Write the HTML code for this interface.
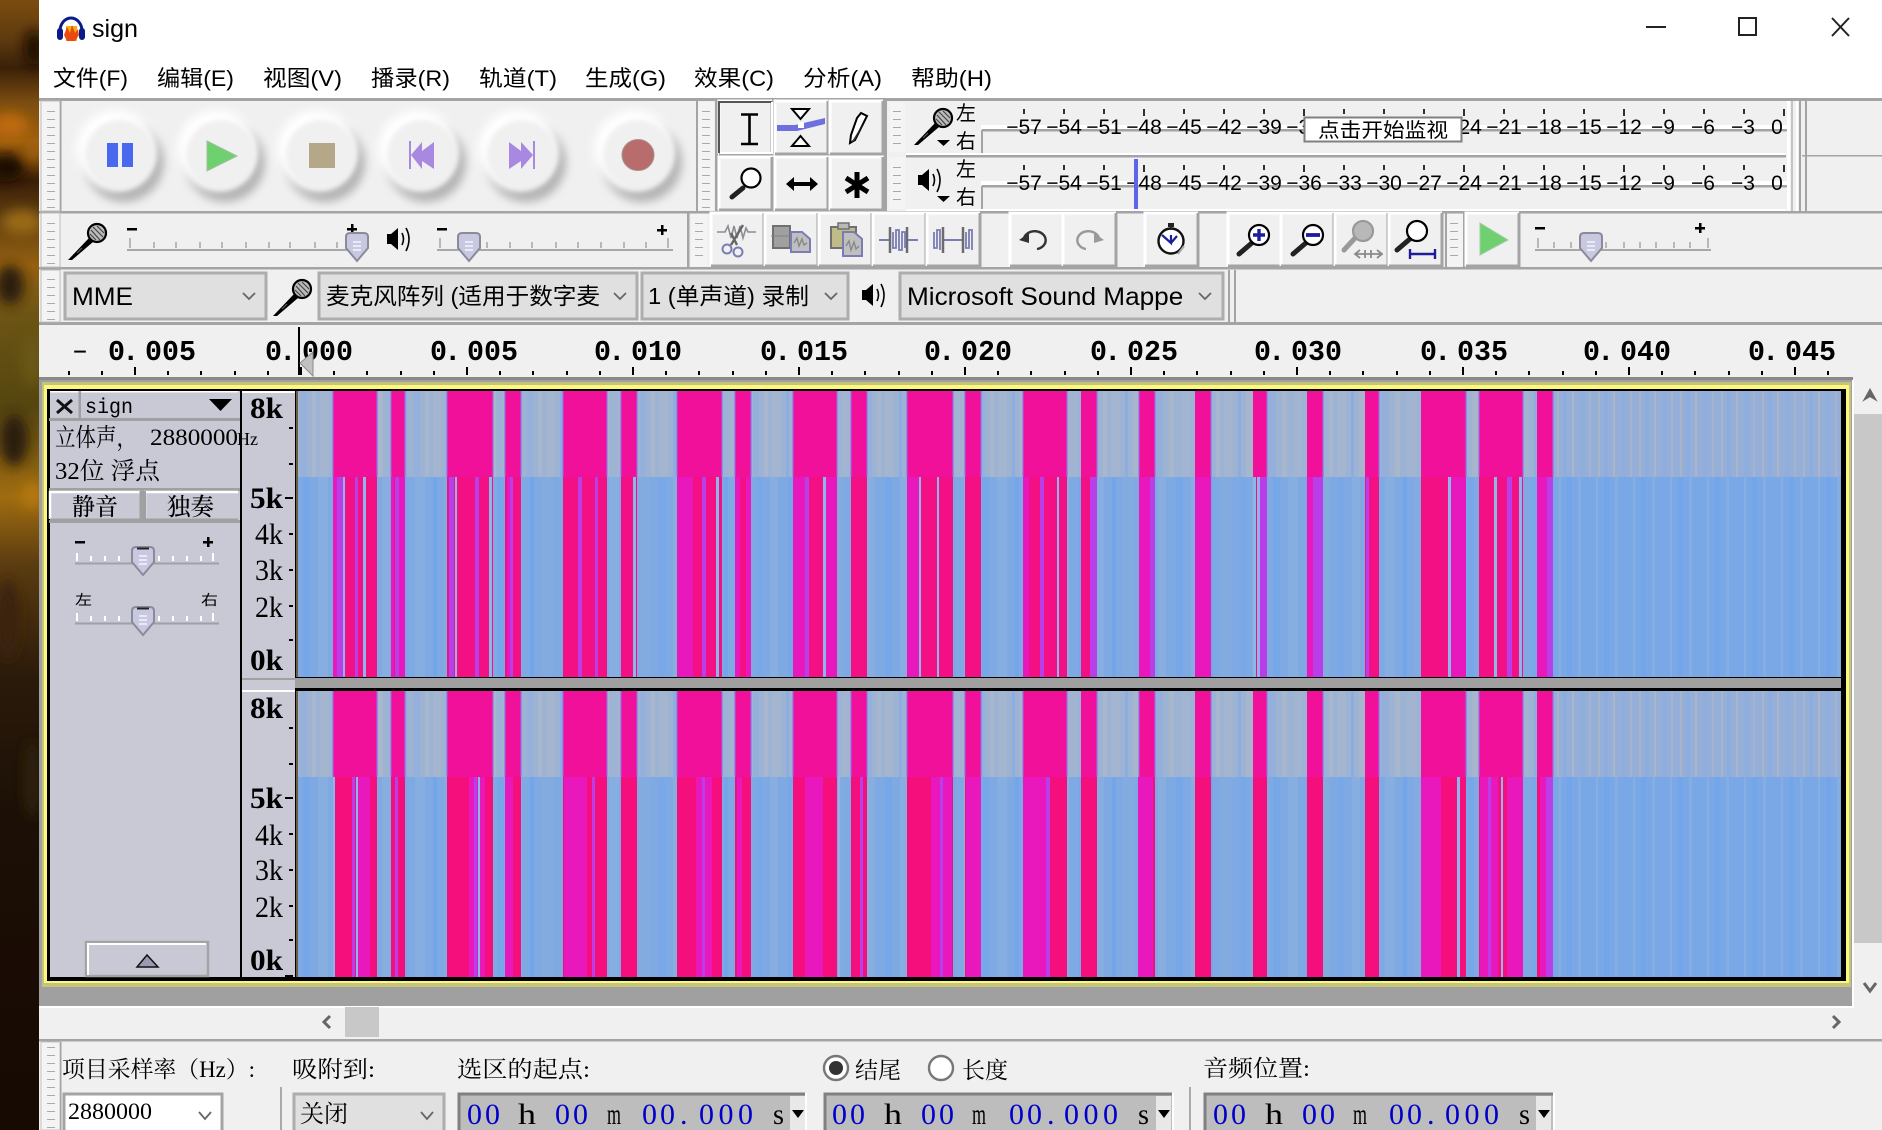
<!DOCTYPE html>
<html lang="zh"><head><meta charset="utf-8"><title>sign</title>
<style>
html,body{margin:0;padding:0;width:1882px;height:1130px;overflow:hidden;background:#fff}
svg{display:block}
.s{font-family:"Liberation Sans","Noto Sans CJK SC",sans-serif;fill:#000}
.z{font-family:"Liberation Serif","Noto Serif CJK SC",serif;fill:#000}
.m{font-family:"Liberation Mono","Noto Serif CJK SC",monospace;fill:#000}
.r{font-family:"Liberation Mono",monospace;font-weight:bold;font-size:29px;fill:#000}
.t{font-size:21px;text-anchor:middle}
.b{fill:#0000c8;font-size:30px}
.v{font-size:30px}
</style></head><body>
<svg width="1882" height="1130" viewBox="0 0 1882 1130" xmlns="http://www.w3.org/2000/svg">
<defs>
<linearGradient id="wall" x1="0" y1="0" x2="0" y2="1">
<stop offset="0" stop-color="#7a4c10"/><stop offset=".035" stop-color="#5e3a0e"/><stop offset=".06" stop-color="#3a2008"/><stop offset=".09" stop-color="#7a4c10"/><stop offset=".125" stop-color="#a0600e"/><stop offset=".16" stop-color="#3a1e06"/><stop offset=".19" stop-color="#5c3c10"/><stop offset=".235" stop-color="#946010"/><stop offset=".28" stop-color="#6c5414"/><stop offset=".36" stop-color="#544610"/><stop offset=".44" stop-color="#a06c10"/><stop offset=".5" stop-color="#5a3c10"/><stop offset=".6" stop-color="#2a1a0a"/><stop offset=".72" stop-color="#1c1006"/><stop offset=".85" stop-color="#1a0c04"/><stop offset="1" stop-color="#160a02"/>
</linearGradient>
<filter id="bl6" x="-60%" y="-60%" width="220%" height="220%"><feGaussianBlur stdDeviation="6"/></filter>
<clipPath id="cw"><rect width="39" height="1130"/></clipPath>
<pattern id="grip" width="8" height="8" patternUnits="userSpaceOnUse"><rect x="0" y="7" width="8" height="2" fill="#a8a8a8"/></pattern>
<pattern id="rt" width="166" height="20" patternUnits="userSpaceOnUse" patternTransform="translate(134,360)">
<rect x="0" y="7" width="2" height="8" fill="#000"/><rect x="33" y="11" width="2" height="4" fill="#000"/><rect x="66" y="11" width="2" height="4" fill="#000"/><rect x="100" y="11" width="2" height="4" fill="#000"/><rect x="133" y="11" width="2" height="4" fill="#000"/>
</pattern>
<pattern id="st1" width="113" height="10" patternUnits="userSpaceOnUse" patternTransform="translate(298,0)">
<rect width="113" height="10" fill="#9db3d4"/><rect x="3" width="6" height="10" fill="#95b0da"/><rect x="14" width="4" height="10" fill="#a8b6ce"/><rect x="22" width="9" height="10" fill="#a4b5cf"/><rect x="36" width="3" height="10" fill="#8dacdf"/><rect x="44" width="10" height="10" fill="#a7b6cc"/><rect x="58" width="3" height="10" fill="#b0bac8"/><rect x="66" width="8" height="10" fill="#94afd9"/><rect x="80" width="5" height="10" fill="#a9b7cc"/><rect x="92" width="9" height="10" fill="#a1b4d1"/><rect x="106" width="3" height="10" fill="#8fade0"/>
</pattern>
<pattern id="st2" width="97" height="10" patternUnits="userSpaceOnUse" patternTransform="translate(298,0)">
<rect width="97" height="10" fill="#7ea9e3"/><rect x="5" width="7" height="10" fill="#76a7e8"/><rect x="20" width="10" height="10" fill="#86aee0"/><rect x="38" width="4" height="10" fill="#73a5ea"/><rect x="49" width="12" height="10" fill="#83abe0"/><rect x="70" width="6" height="10" fill="#78a8e7"/><rect x="84" width="8" height="10" fill="#87aedf"/>
</pattern>
<pattern id="st3" width="41" height="10" patternUnits="userSpaceOnUse" patternTransform="translate(1553,0)">
<rect width="41" height="10" fill="#96afd8"/><rect x="4" width="2" height="10" fill="#a8b4c8"/><rect x="10" width="4" height="10" fill="#8dadde"/><rect x="19" width="2" height="10" fill="#aab6c8"/><rect x="27" width="5" height="10" fill="#90aedc"/><rect x="36" width="2" height="10" fill="#a4b3ce"/>
</pattern>
<pattern id="st4" width="37" height="10" patternUnits="userSpaceOnUse" patternTransform="translate(1553,0)">
<rect width="37" height="10" fill="#7aa8e6"/><rect x="6" width="2" height="10" fill="#86aee0"/><rect x="14" width="5" height="10" fill="#72a5ea"/><rect x="25" width="3" height="10" fill="#84ade2"/>
</pattern>
<path id="bars" d="M333 0H377V1H333ZM391 0H405V1H391ZM447 0H493V1H447ZM505 0H521V1H505ZM563 0H607V1H563ZM621 0H637V1H621ZM677 0H722V1H677ZM735 0H751V1H735ZM793 0H837V1H793ZM851 0H867V1H851ZM907 0H953V1H907ZM965 0H981V1H965ZM1023 0H1067V1H1023ZM1081 0H1097V1H1081ZM1139 0H1155V1H1139ZM1195 0H1211V1H1195ZM1253 0H1267V1H1253ZM1307 0H1323V1H1307ZM1365 0H1379V1H1365ZM1421 0H1466V1H1421ZM1479 0H1523V1H1479ZM1537 0H1553V1H1537Z"/>
<path id="edges" d="M333 0V1M377 0V1M391 0V1M405 0V1M447 0V1M493 0V1M505 0V1M521 0V1M563 0V1M607 0V1M621 0V1M637 0V1M677 0V1M722 0V1M735 0V1M751 0V1M793 0V1M837 0V1M851 0V1M867 0V1M907 0V1M953 0V1M965 0V1M981 0V1M1023 0V1M1067 0V1M1097 0V1M1139 0V1M1155 0V1M1211 0V1M1267 0V1M1323 0V1M1379 0V1M1466 0V1M1479 0V1M1523 0V1M1553 0V1" stroke-width="1.6" fill="none" vector-effect="non-scaling-stroke"/>
<g id="mic"><path d="M-8 5L-4 9L-25 27L-29 27Z" fill="#000"/><path d="M-20 20L-15 15" stroke="#666" stroke-width="1"/><circle cx="0" cy="0" r="9" fill="#bbb" stroke="#000" stroke-width="2.2"/><path d="M-6 -3L3 7M-4 -6L6 4M0 -7L7 0M-7 1L-1 7" stroke="#444" stroke-width="1.2"/></g>
<g id="spk"><path d="M0 7H4L11 1V23L4 17H0Z" fill="#000"/><path d="M15 6Q18 12 15 18M19 1Q25 12 19 24" fill="none" stroke="#000" stroke-width="1.6"/></g>
<g id="thumb"><path d="M-11 4Q-11 0 -7 0H7Q11 0 11 4V15L0 28L-11 15Z" fill="#c8c9e0" stroke="#8a8a9a" stroke-width="2"/><path d="M-4 9H4M-4 13H4M-4 17H4" stroke="#f4f4ff" stroke-width="1.6"/></g>
<g id="btn"><rect width="53" height="53" fill="#f0f0f0"/><path d="M0 53V0H53" fill="none" stroke="#fff" stroke-width="3"/><path d="M0 53H53V0" fill="none" stroke="#a4a4a4" stroke-width="3"/></g>
<g id="circ"><circle cx="4" cy="7" r="40" fill="#b2b2b2" filter="url(#bl4)"/><circle cx="-4" cy="-5" r="40" fill="#fff" filter="url(#bl4)"/><circle cx="0" cy="0" r="35" fill="#f0f0f0" filter="url(#bl2)"/></g>
<filter id="bl4" x="-30%" y="-30%" width="160%" height="160%"><feGaussianBlur stdDeviation="4.5"/></filter>
<filter id="bl2" x="-30%" y="-30%" width="160%" height="160%"><feGaussianBlur stdDeviation="2.5"/></filter>
<g id="lens"><path d="M-6 7L-20 19" stroke="#222" stroke-width="5" stroke-linecap="round"/><circle r="10" fill="#fff" stroke="#000" stroke-width="2.2"/></g>
<clipPath id="cout"><rect x="900" y="270" width="282" height="50"/></clipPath>
<clipPath id="cin"><rect x="320" y="270" width="281" height="50"/></clipPath>
<clipPath id="cch"><rect x="645" y="270" width="165" height="50"/></clipPath>
</defs>

<rect width="1882" height="1130" fill="#fff"/>
<rect x="0" y="0" width="39" height="1130" fill="url(#wall)"/>
<g clip-path="url(#cw)">
<g filter="url(#bl6)">
<ellipse cx="34" cy="48" rx="10" ry="18" fill="#1c0c02"/>
<ellipse cx="10" cy="125" rx="18" ry="12" fill="#c06a10"/>
<ellipse cx="6" cy="168" rx="20" ry="14" fill="#1a0a02"/>
<ellipse cx="34" cy="150" rx="9" ry="12" fill="#a06010"/>
<ellipse cx="22" cy="222" rx="20" ry="12" fill="#9a6a14"/>
<ellipse cx="10" cy="285" rx="14" ry="20" fill="#2a1c08"/>
<ellipse cx="32" cy="360" rx="10" ry="26" fill="#6a5814"/>
<ellipse cx="14" cy="440" rx="14" ry="26" fill="#2a1a08"/>
<ellipse cx="32" cy="495" rx="10" ry="14" fill="#b47810"/>
<ellipse cx="8" cy="620" rx="12" ry="40" fill="#3a2410"/>
<ellipse cx="32" cy="780" rx="8" ry="40" fill="#2e2008"/>
</g>
</g>
<rect x="39" y="99" width="1843" height="1031" fill="#f0f0f0"/>

<!-- Title bar -->
<path d="M60 31A11 13 0 0 1 82 31" fill="none" stroke="#0a1a8a" stroke-width="3"/>
<rect x="66" y="26" width="11" height="15" fill="#f4b010"/><path d="M64 35L67 27L70 33L72 25L75 33L78 29L79 35L75 41H67Z" fill="#e84a10"/>
<rect x="57" y="28" width="6" height="12" rx="3" fill="#0a1a8a"/><rect x="79" y="28" width="6" height="12" rx="3" fill="#0a1a8a"/>
<text class="s" x="92" y="37" font-size="25" textLength="46" lengthAdjust="spacingAndGlyphs" fill="#222">sign</text>
<rect x="1646" y="26" width="20" height="2" fill="#222"/>
<rect x="1739" y="18" width="17" height="17" fill="none" stroke="#222" stroke-width="2"/>
<path d="M1832 18L1849 36M1849 18L1832 36" stroke="#222" stroke-width="2"/>

<!-- Menu -->
<g font-size="22" class="s">
<text class="s" x="53" y="86" textLength="75" lengthAdjust="spacingAndGlyphs" font-size="22">文件(F)</text>
<text class="s" x="157" y="86" textLength="77" lengthAdjust="spacingAndGlyphs" font-size="22">编辑(E)</text>
<text class="s" x="263" y="86" textLength="79" lengthAdjust="spacingAndGlyphs" font-size="22">视图(V)</text>
<text class="s" x="371" y="86" textLength="79" lengthAdjust="spacingAndGlyphs" font-size="22">播录(R)</text>
<text class="s" x="479" y="86" textLength="78" lengthAdjust="spacingAndGlyphs" font-size="22">轨道(T)</text>
<text class="s" x="585" y="86" textLength="81" lengthAdjust="spacingAndGlyphs" font-size="22">生成(G)</text>
<text class="s" x="694" y="86" textLength="80" lengthAdjust="spacingAndGlyphs" font-size="22">效果(C)</text>
<text class="s" x="803" y="86" textLength="79" lengthAdjust="spacingAndGlyphs" font-size="22">分析(A)</text>
<text class="s" x="911" y="86" textLength="81" lengthAdjust="spacingAndGlyphs" font-size="22">帮助(H)</text>
</g>

<!-- Toolbar lines -->
<rect x="39" y="98" width="1843" height="3" fill="#a4a4a4"/>
<rect x="39" y="211" width="1843" height="2.5" fill="#a4a4a4"/>
<rect x="39" y="267" width="1843" height="2.5" fill="#a4a4a4"/>
<rect x="39" y="322" width="1843" height="3" fill="#a4a4a4"/>
<rect x="696" y="101" width="2" height="110" fill="#a4a4a4"/>
<rect x="884" y="101" width="3" height="110" fill="#a4a4a4"/>
<rect x="715" y="101" width="3" height="110" fill="#a4a4a4"/>
<rect x="687" y="213" width="2.5" height="54" fill="#a4a4a4"/>
<rect x="1802" y="155" width="80" height="1.5" fill="#a4a4a4"/>

<!-- Grippers -->
<g>
<rect x="41" y="101" width="19" height="110" fill="#f4f4f4" stroke="#bcbcbc"/><rect x="47" y="104" width="8" height="104" fill="url(#grip)"/>
<rect x="60" y="101" width="1.5" height="110" fill="#a4a4a4"/>
<rect x="41" y="213" width="19" height="54" fill="#f4f4f4" stroke="#bcbcbc"/><rect x="47" y="218" width="8" height="46" fill="url(#grip)"/>
<rect x="41" y="270" width="19" height="52" fill="#f4f4f4" stroke="#bcbcbc"/><rect x="47" y="274" width="8" height="46" fill="url(#grip)"/>
<rect x="698" y="102" width="16" height="108" fill="#f4f4f4"/><rect x="702" y="104" width="8" height="104" fill="url(#grip)"/>
<rect x="889" y="102" width="16" height="50" fill="#f4f4f4"/><rect x="893" y="104" width="8" height="46" fill="url(#grip)"/>
<rect x="889" y="157" width="16" height="52" fill="#f4f4f4"/><rect x="893" y="160" width="8" height="46" fill="url(#grip)"/>
<rect x="691" y="214" width="16" height="52" fill="#f4f4f4"/><rect x="695" y="218" width="8" height="44" fill="url(#grip)"/>
<rect x="1446" y="214" width="17" height="52" fill="#f4f4f4"/><rect x="1450" y="218" width="8" height="44" fill="url(#grip)"/>
<rect x="1445" y="213" width="2" height="54" fill="#a4a4a4"/><rect x="1463" y="213" width="2" height="54" fill="#a4a4a4"/>
</g>

<!-- Transport -->
<use href="#circ" x="120" y="155"/><use href="#circ" x="221" y="155"/><use href="#circ" x="321" y="155"/><use href="#circ" x="422" y="155"/><use href="#circ" x="522" y="155"/><use href="#circ" x="638" y="155"/>
<rect x="107" y="143" width="11" height="24" fill="#4a68ee"/><rect x="122" y="143" width="11" height="24" fill="#4a68ee"/>
<path d="M207 141L237 156L207 171Z" fill="#6fd06f" stroke="#9cc09c"/>
<rect x="309" y="143" width="26" height="25" fill="#b5a888"/>
<path d="M409 141H411V169H409ZM434 142V169L422 161V169L411 155L422 142V151Z" fill="#a888e0"/>
<path d="M533 141H535V169H533ZM509 142V169L521 161V169L533 155L521 142V151Z" fill="#a888e0"/>
<ellipse cx="638" cy="155" rx="16" ry="15.5" fill="#b96c6c" stroke="#a89090"/>

<!-- Mixer row -->
<use href="#mic" x="97" y="233"/>
<use href="#spk" x="387" y="227"/>
<g fill="#000">
<rect x="127" y="228" width="10" height="2.5"/><rect x="347" y="228" width="10" height="2.5"/><rect x="351" y="224" width="2.5" height="10"/>
<rect x="437" y="228" width="10" height="2.5"/><rect x="657" y="229" width="10" height="2.5"/><rect x="661" y="225" width="2.5" height="10"/>
<rect x="1535" y="227" width="10" height="2.5"/><rect x="1695" y="227" width="10" height="2.5"/><rect x="1699" y="223" width="2.5" height="10"/>
</g>
<g fill="#b8b8b8">
<rect x="129" y="238" width="2" height="10"/><rect x="153" y="242" width="2" height="6"/><rect x="175" y="242" width="2" height="6"/><rect x="199" y="242" width="2" height="6"/><rect x="221" y="242" width="2" height="6"/><rect x="245" y="242" width="2" height="6"/><rect x="268" y="242" width="2" height="6"/><rect x="289" y="242" width="2" height="6"/><rect x="314" y="242" width="2" height="6"/><rect x="336" y="242" width="2" height="6"/>
<rect x="439" y="238" width="2" height="10"/><rect x="486" y="242" width="2" height="6"/><rect x="509" y="242" width="2" height="6"/><rect x="531" y="242" width="2" height="6"/><rect x="555" y="242" width="2" height="6"/><rect x="577" y="242" width="2" height="6"/><rect x="600" y="242" width="2" height="6"/><rect x="623" y="242" width="2" height="6"/><rect x="645" y="242" width="2" height="6"/><rect x="667" y="238" width="2" height="10"/>
<rect x="1537" y="238" width="2" height="10"/><rect x="1553" y="242" width="2" height="6"/><rect x="1570" y="242" width="2" height="6"/><rect x="1605" y="242" width="2" height="6"/><rect x="1623" y="242" width="2" height="6"/><rect x="1639" y="242" width="2" height="6"/><rect x="1655" y="242" width="2" height="6"/><rect x="1673" y="242" width="2" height="6"/><rect x="1689" y="242" width="2" height="6"/><rect x="1707" y="238" width="2" height="10"/>
</g>
<rect x="127" y="249" width="225" height="2" fill="#a8a8a8"/><rect x="437" y="249" width="236" height="2" fill="#a8a8a8"/><rect x="1535" y="249" width="176" height="2" fill="#a8a8a8"/>
<use href="#thumb" x="357" y="233"/><use href="#thumb" x="469" y="233"/><use href="#thumb" x="1591" y="233"/>

<!-- Device row -->
<g fill="#e0e0e0" stroke="#adadad" stroke-width="3">
<rect x="65" y="273" width="201" height="46"/><rect x="319" y="273" width="318" height="46"/><rect x="642" y="273" width="206" height="46"/><rect x="900" y="273" width="323" height="46"/>
</g>
<use href="#mic" x="302" y="289"/>
<use href="#spk" x="862" y="283"/>
<text class="s" x="72" y="305" font-size="25" textLength="61" lengthAdjust="spacingAndGlyphs">MME</text>
<text class="s" x="326" y="304" font-size="23" textLength="274" lengthAdjust="spacingAndGlyphs" clip-path="url(#cin)">麦克风阵列 (适用于数字麦</text>
<text class="s" x="648" y="304" font-size="23" textLength="161" lengthAdjust="spacingAndGlyphs" clip-path="url(#cch)">1 (单声道) 录制</text>
<text class="s" x="907" y="305" font-size="25" textLength="285" lengthAdjust="spacingAndGlyphs" clip-path="url(#cout)">Microsoft Sound Mapper</text>
<path d="M243 293L249 299L255 293M614 293L620 299L626 293M825 293L831 299L837 293M1199 293L1205 299L1211 293" fill="none" stroke="#666" stroke-width="1.8"/>
<rect x="1228" y="270" width="2" height="52" fill="#a4a4a4"/><rect x="1234" y="270" width="2" height="52" fill="#a4a4a4"/>

<!-- Tools -->
<use href="#btn" x="719" y="101"/><use href="#btn" x="775" y="101"/><use href="#btn" x="830" y="101"/>
<use href="#btn" x="719" y="157"/><use href="#btn" x="775" y="157"/><use href="#btn" x="830" y="157"/>
<path d="M719 153V102H772" fill="none" stroke="#555" stroke-width="2"/><path d="M720 153H772V102" fill="none" stroke="#fff" stroke-width="2"/>
<path d="M741 114.5H758M749.5 114.5V144M741 144H758" stroke="#000" stroke-width="2.6" fill="none"/>
<path d="M792 109H809L800.5 119ZM792 146H809L800.5 136Z" fill="#fff" stroke="#000" stroke-width="2"/>
<path d="M777 125H795L825 118V124L797 131H777Z" fill="#6f70e0"/><rect x="798" y="122" width="6" height="6" fill="#fff"/>
<path d="M857 118L861 113L867 116L855 140L850 143L851 135Z" fill="#fff" stroke="#000" stroke-width="2"/><path d="M864 122L855 140L851 143Z" fill="#333"/>
<path d="M743 188L732 197" stroke="#222" stroke-width="5" stroke-linecap="round"/><circle cx="751" cy="178" r="9.5" fill="#fff" stroke="#000" stroke-width="2.2"/>
<path d="M786 184L794 177V182H810V177L818 184L810 191V186H794V191Z" fill="#000"/>
<path d="M857 172V198M846 178L868 192M868 178L846 192" stroke="#000" stroke-width="5"/>

<!-- Meter -->
<use href="#mic" x="943" y="118"/><path d="M937 140H950L943.5 146Z" fill="#000"/>
<use href="#spk" x="918" y="168"/><path d="M937 196H950L943.5 202Z" fill="#000"/>
<g class="s" font-size="20">
<text class="s" font-size="20" x="956" y="120">左</text><text class="s" font-size="20" x="956" y="148">右</text>
<text class="s" font-size="20" x="956" y="176">左</text><text class="s" font-size="20" x="956" y="204">右</text>
</g>
<rect x="981" y="125" width="806" height="4" fill="#fff"/><rect x="982" y="129" width="805" height="2.5" fill="#a4a4a4"/><rect x="981" y="130" width="2" height="23" fill="#a4a4a4"/>
<rect x="981" y="181" width="806" height="4" fill="#fff"/><rect x="982" y="185" width="805" height="2.5" fill="#a4a4a4"/><rect x="981" y="186" width="2" height="23" fill="#a4a4a4"/>
<rect x="906" y="153" width="880" height="2" fill="#fff"/><rect x="906" y="155" width="880" height="2.5" fill="#a4a4a4"/><rect x="906" y="209" width="880" height="2" fill="#fff"/>
<rect x="1787" y="101" width="3" height="110" fill="#fff"/><rect x="1791" y="101" width="2" height="110" fill="#c4c4c4"/><rect x="1796" y="101" width="2" height="110" fill="#fff"/><rect x="1799" y="101" width="2" height="110" fill="#a4a4a4"/><rect x="1805" y="101" width="2" height="110" fill="#a4a4a4"/>
<path d="M1024 109V114M1064 109V114M1104 109V114M1144 109V116M1184 109V114M1224 109V114M1264 109V114M1304 109V116M1344 109V114M1384 109V114M1424 109V114M1464 109V116M1504 109V114M1544 109V114M1584 109V114M1624 109V116M1664 109V114M1704 109V114M1744 109V114M1784 109V116M1024 165V170M1064 165V170M1104 165V170M1144 165V172M1184 165V170M1224 165V170M1264 165V170M1304 165V172M1344 165V170M1384 165V170M1424 165V170M1464 165V172M1504 165V170M1544 165V170M1584 165V170M1624 165V172M1664 165V170M1704 165V170M1744 165V170M1784 165V172" stroke="#000" stroke-width="1.6"/>
<g class="s">
<text class="s t" x="1024" y="134">−57</text><text class="s t" x="1064" y="134">−54</text><text class="s t" x="1104" y="134">−51</text><text class="s t" x="1144" y="134">−48</text><text class="s t" x="1184" y="134">−45</text><text class="s t" x="1224" y="134">−42</text><text class="s t" x="1264" y="134">−39</text><text class="s t" x="1304" y="134">−36</text><text class="s t" x="1464" y="134">−24</text><text class="s t" x="1504" y="134">−21</text><text class="s t" x="1544" y="134">−18</text><text class="s t" x="1584" y="134">−15</text><text class="s t" x="1624" y="134">−12</text><text class="s t" x="1663" y="134">−9</text><text class="s t" x="1703" y="134">−6</text><text class="s t" x="1743" y="134">−3</text><text class="s t" x="1777" y="134">0</text>
<text class="s t" x="1024" y="190">−57</text><text class="s t" x="1064" y="190">−54</text><text class="s t" x="1104" y="190">−51</text><text class="s t" x="1144" y="190">−48</text><text class="s t" x="1184" y="190">−45</text><text class="s t" x="1224" y="190">−42</text><text class="s t" x="1264" y="190">−39</text><text class="s t" x="1304" y="190">−36</text><text class="s t" x="1344" y="190">−33</text><text class="s t" x="1384" y="190">−30</text><text class="s t" x="1424" y="190">−27</text><text class="s t" x="1464" y="190">−24</text><text class="s t" x="1504" y="190">−21</text><text class="s t" x="1544" y="190">−18</text><text class="s t" x="1584" y="190">−15</text><text class="s t" x="1624" y="190">−12</text><text class="s t" x="1663" y="190">−9</text><text class="s t" x="1703" y="190">−6</text><text class="s t" x="1743" y="190">−3</text><text class="s t" x="1777" y="190">0</text>
</g>
<rect x="1134" y="159" width="4" height="50" fill="#5d64e8"/>
<rect x="1304.5" y="117.5" width="157" height="24" fill="#fff" stroke="#808080" stroke-width="2"/>
<text class="s" x="1318" y="137" font-size="20" textLength="130" lengthAdjust="spacingAndGlyphs">点击开始监视</text>

<!-- Edit toolbar -->
<use href="#btn" x="711" y="213"/><use href="#btn" x="765" y="213"/><use href="#btn" x="819" y="213"/><use href="#btn" x="873" y="213"/><use href="#btn" x="927" y="213"/>
<use href="#btn" x="1010" y="213"/><use href="#btn" x="1063" y="213"/><use href="#btn" x="1145" y="213"/>
<use href="#btn" x="1228" y="213"/><use href="#btn" x="1281" y="213"/><use href="#btn" x="1335" y="213"/><use href="#btn" x="1389" y="213"/><use href="#btn" x="1466" y="213"/>
<path d="M717 232H725L728 226L731 238L734 226L737 238L740 226L743 238L746 228L748 232H756" fill="none" stroke="#8c8c94" stroke-width="1.6"/>
<path d="M743 225L731 245M731 233L737 245" stroke="#666" stroke-width="2.4"/><circle cx="727" cy="249" r="4.5" fill="none" stroke="#7a7cb4" stroke-width="2"/><circle cx="738" cy="252" r="4.5" fill="none" stroke="#7a7cb4" stroke-width="2"/>
<rect x="773" y="226" width="17" height="22" fill="#a0a0a0" stroke="#707070" stroke-width="2"/><path d="M771 236H790" stroke="#808080"/>
<path d="M791 232H802L810 239V252H791Z" fill="#bfbfbf" stroke="#7a7cb4" stroke-width="2"/><path d="M794 243L797 238L799 246L802 239L804 245L807 243" fill="none" stroke="#888" stroke-width="1.4"/>
<rect x="831" y="227" width="25" height="21" fill="#c0bc88" stroke="#707070" stroke-width="2"/><rect x="838" y="223" width="11" height="6" fill="#b8b8b8" stroke="#707070" stroke-width="1.5"/>
<path d="M843 232H854L862 239V256H843Z" fill="#bfbfbf" stroke="#7a7cb4" stroke-width="2"/><path d="M846 246L849 241L851 250L854 242L856 249L859 246" fill="none" stroke="#888" stroke-width="1.4"/>
<path d="M879 240H889M908 240H918" stroke="#7a7cb4" stroke-width="2"/><path d="M890 227V253M907 227V253" stroke="#6c6c6c" stroke-width="2.5"/><path d="M893 232V248H896V230H899V250H902V232H905V248" fill="none" stroke="#7a7cb4" stroke-width="1.8"/>
<path d="M942 240H964" stroke="#7a7cb4" stroke-width="2"/><path d="M943 227V253M963 227V253" stroke="#6c6c6c" stroke-width="2.5"/><path d="M934 232V248H937V230H940V250M966 232V248H969V230H972V250" fill="none" stroke="#7a7cb4" stroke-width="1.8"/>
<path d="M1024 238A11 9 0 1 1 1037 249" fill="none" stroke="#333" stroke-width="2.4"/><path d="M1019 240L1029 233V243Z" fill="#333"/>
<path d="M1099 238A11 9 0 1 0 1086 249" fill="none" stroke="#999" stroke-width="2.4"/><path d="M1104 240L1094 233V243Z" fill="#999"/>
<circle cx="1171" cy="241" r="12.5" fill="#fff" stroke="#111" stroke-width="2.4"/><rect x="1168" y="223" width="6" height="4" fill="#222"/><rect x="1170" y="226" width="2" height="4" fill="#222"/>
<path d="M1162 235L1171 243L1171 235M1171 243L1177 236" fill="none" stroke="#1e1e9c" stroke-width="2.2"/><path d="M1178 254L1184 246" stroke="#aaa" stroke-width="2"/>
<use href="#lens" x="1259" y="235"/><path d="M1259 229V241M1253 235H1265" stroke="#1c1c9c" stroke-width="3.4"/>
<use href="#lens" x="1313" y="235"/><path d="M1306 235H1320" stroke="#1c1c9c" stroke-width="3.8"/>
<path d="M1356 237L1344 250" stroke="#999" stroke-width="5" stroke-linecap="round"/><circle cx="1363" cy="231" r="10" fill="#b8b8b8" stroke="#999" stroke-width="2.2"/>
<path d="M1356 254H1381M1360 250L1355 254L1360 258M1377 250L1382 254L1377 258M1365 250V258M1371 250V258" fill="none" stroke="#8a8a8a" stroke-width="1.8"/>
<use href="#lens" x="1417" y="231"/><path d="M1410 249V259M1435 249V259M1410 254H1435" stroke="#1c1c9c" stroke-width="2.4"/>
<path d="M1480 223L1508 240L1480 255Z" fill="#6fd070" stroke="#a8c8a8"/>

<!-- Ruler -->
<rect x="39" y="325" width="1843" height="52" fill="#f0f0f0"/>
<text class="s" x="73" y="361" font-size="28" textLength="14" lengthAdjust="spacingAndGlyphs">−</text>
<g>
<text class="r" x="108" y="360" textLength="17" lengthAdjust="spacingAndGlyphs">0</text><text class="r" x="122" y="360">.</text><text class="r" x="145" y="360" textLength="51" lengthAdjust="spacingAndGlyphs">005</text>
<text class="r" x="265" y="360" textLength="17" lengthAdjust="spacingAndGlyphs">0</text><text class="r" x="279" y="360">.</text><text class="r" x="302" y="360" textLength="51" lengthAdjust="spacingAndGlyphs">000</text>
<text class="r" x="430" y="360" textLength="17" lengthAdjust="spacingAndGlyphs">0</text><text class="r" x="444" y="360">.</text><text class="r" x="467" y="360" textLength="51" lengthAdjust="spacingAndGlyphs">005</text>
<text class="r" x="594" y="360" textLength="17" lengthAdjust="spacingAndGlyphs">0</text><text class="r" x="608" y="360">.</text><text class="r" x="631" y="360" textLength="51" lengthAdjust="spacingAndGlyphs">010</text>
<text class="r" x="760" y="360" textLength="17" lengthAdjust="spacingAndGlyphs">0</text><text class="r" x="774" y="360">.</text><text class="r" x="797" y="360" textLength="51" lengthAdjust="spacingAndGlyphs">015</text>
<text class="r" x="924" y="360" textLength="17" lengthAdjust="spacingAndGlyphs">0</text><text class="r" x="938" y="360">.</text><text class="r" x="961" y="360" textLength="51" lengthAdjust="spacingAndGlyphs">020</text>
<text class="r" x="1090" y="360" textLength="17" lengthAdjust="spacingAndGlyphs">0</text><text class="r" x="1104" y="360">.</text><text class="r" x="1127" y="360" textLength="51" lengthAdjust="spacingAndGlyphs">025</text>
<text class="r" x="1254" y="360" textLength="17" lengthAdjust="spacingAndGlyphs">0</text><text class="r" x="1268" y="360">.</text><text class="r" x="1291" y="360" textLength="51" lengthAdjust="spacingAndGlyphs">030</text>
<text class="r" x="1420" y="360" textLength="17" lengthAdjust="spacingAndGlyphs">0</text><text class="r" x="1434" y="360">.</text><text class="r" x="1457" y="360" textLength="51" lengthAdjust="spacingAndGlyphs">035</text>
<text class="r" x="1583" y="360" textLength="17" lengthAdjust="spacingAndGlyphs">0</text><text class="r" x="1597" y="360">.</text><text class="r" x="1620" y="360" textLength="51" lengthAdjust="spacingAndGlyphs">040</text>
<text class="r" x="1748" y="360" textLength="17" lengthAdjust="spacingAndGlyphs">0</text><text class="r" x="1762" y="360">.</text><text class="r" x="1785" y="360" textLength="51" lengthAdjust="spacingAndGlyphs">045</text>
</g>
<rect x="60" y="360" width="1790" height="15" fill="url(#rt)"/>
<rect x="298" y="327" width="2" height="48" fill="#000"/>
<path d="M313 352V376L300 363Z" fill="#c0c0c0" stroke="#8c8c8c"/>

<!-- Track background -->
<rect x="39" y="377" width="1814" height="3" fill="#888"/>
<rect x="39" y="380" width="1814" height="627" fill="#a0a0a0"/>
<rect x="42" y="382" width="1809" height="605" fill="#c4c47c"/>
<rect x="44" y="385" width="1805" height="598" fill="#fdf780"/>
<rect x="47" y="389" width="1799" height="592" fill="#000"/>
<rect x="39" y="1006" width="1815" height="2" fill="#fff"/>

<!-- Track panel -->
<rect x="50" y="391" width="190" height="586" fill="#c9c9d6"/>
<rect x="242" y="391" width="53" height="286" fill="#c9c9d6"/><rect x="242" y="691" width="53" height="286" fill="#c9c9d6"/>
<rect x="242" y="391" width="53" height="2" fill="#fff"/><rect x="242" y="690" width="53" height="2" fill="#fff"/>
<rect x="242" y="677" width="53" height="13" fill="#c9c9d6"/><rect x="242" y="678" width="53" height="2" fill="#a0a0a0"/>
<rect x="296" y="391" width="2" height="286" fill="#6b5f45"/><rect x="296" y="691" width="2" height="286" fill="#6b5f45"/>
<rect x="295" y="678" width="1546" height="10" fill="#a0a0a0"/>

<!-- Spectrogram top -->
<rect x="298" y="391" width="1255" height="86" fill="url(#st1)"/><rect x="1553" y="391" width="288" height="86" fill="url(#st3)"/>
<rect x="298" y="477" width="1255" height="200" fill="url(#st2)"/><rect x="1553" y="477" width="288" height="200" fill="url(#st4)"/>
<use href="#bars" transform="translate(0,391) scale(1,86)" fill="#f0109a"/>
<use href="#edges" transform="translate(0,391) scale(1,86)" stroke="#9a6aea" opacity=".7"/>
<use href="#bars" transform="translate(0,477) scale(1,200)" fill="#f30f84"/>
<g fill="#e818bc">
<rect x="333" y="477" width="4" height="200"/><rect x="391" y="477" width="3" height="200"/><rect x="399" y="477" width="6" height="200"/><rect x="507" y="477" width="5" height="200"/><rect x="677" y="477" width="16" height="200"/><rect x="735" y="477" width="5" height="200"/><rect x="746" y="477" width="5" height="200"/><rect x="793" y="477" width="12" height="200"/><rect x="826" y="477" width="11" height="200"/><rect x="907" y="477" width="12" height="200"/><rect x="1023" y="477" width="6" height="200"/><rect x="1139" y="477" width="11" height="200"/><rect x="1195" y="477" width="16" height="200"/><rect x="1307" y="477" width="6" height="200"/><rect x="1449" y="477" width="17" height="200"/><rect x="1537" y="477" width="16" height="200"/>
</g>
<g fill="#b83ee8">
<rect x="337" y="477" width="6" height="200"/><rect x="355" y="477" width="3" height="200"/><rect x="395" y="477" width="4" height="200"/><rect x="449" y="477" width="5" height="200"/><rect x="475" y="477" width="4" height="200"/><rect x="510" y="477" width="3" height="200"/><rect x="578" y="477" width="4" height="200"/><rect x="595" y="477" width="3" height="200"/><rect x="702" y="477" width="4" height="200"/><rect x="805" y="477" width="4" height="200"/><rect x="1040" y="477" width="4" height="200"/><rect x="1090" y="477" width="7" height="200"/><rect x="1150" y="477" width="5" height="200"/><rect x="1260" y="477" width="7" height="200"/><rect x="1313" y="477" width="10" height="200"/><rect x="1366" y="477" width="3" height="200"/><rect x="1507" y="477" width="5" height="200"/><rect x="1547" y="477" width="6" height="200"/>
</g>
<g fill="#8fb6ea">
<rect x="343" y="477" width="2" height="200"/><rect x="363" y="477" width="3" height="200"/><rect x="455" y="477" width="2" height="200"/><rect x="489" y="477" width="3" height="200"/><rect x="633" y="477" width="3" height="200"/><rect x="716" y="477" width="3" height="200"/><rect x="823" y="477" width="3" height="200"/><rect x="919" y="477" width="2" height="200"/><rect x="937" y="477" width="2" height="200"/><rect x="1057" y="477" width="2" height="200"/><rect x="1253" y="477" width="3" height="200"/><rect x="1257" y="477" width="3" height="200"/><rect x="1448" y="477" width="3" height="200"/><rect x="1494" y="477" width="3" height="200"/><rect x="1519" y="477" width="3" height="200"/>
</g>

<!-- Spectrogram bottom -->
<rect x="298" y="691" width="1255" height="86" fill="url(#st1)"/><rect x="1553" y="691" width="288" height="86" fill="url(#st3)"/>
<rect x="298" y="777" width="1255" height="200" fill="url(#st2)"/><rect x="1553" y="777" width="288" height="200" fill="url(#st4)"/>
<use href="#bars" transform="translate(0,691) scale(1,86)" fill="#f0109a"/>
<use href="#edges" transform="translate(0,691) scale(1,86)" stroke="#9a6aea" opacity=".7"/>
<use href="#bars" transform="translate(0,777) scale(1,200)" fill="#f40f7c"/>
<g fill="#e818bc">
<rect x="357" y="777" width="13" height="200"/><rect x="469" y="777" width="16" height="200"/><rect x="505" y="777" width="8" height="200"/><rect x="564" y="777" width="23" height="200"/><rect x="696" y="777" width="16" height="200"/><rect x="737" y="777" width="5" height="200"/><rect x="805" y="777" width="18" height="200"/><rect x="931" y="777" width="21" height="200"/><rect x="966" y="777" width="15" height="200"/><rect x="1023" y="777" width="25" height="200"/><rect x="1138" y="777" width="15" height="200"/><rect x="1421" y="777" width="20" height="200"/><rect x="1480" y="777" width="18" height="200"/><rect x="1507" y="777" width="16" height="200"/><rect x="1540" y="777" width="13" height="200"/>
</g>
<g fill="#b83ee8">
<rect x="352" y="777" width="3" height="200"/><rect x="395" y="777" width="3" height="200"/><rect x="474" y="777" width="3" height="200"/><rect x="592" y="777" width="3" height="200"/><rect x="702" y="777" width="3" height="200"/><rect x="860" y="777" width="3" height="200"/><rect x="940" y="777" width="3" height="200"/><rect x="1046" y="777" width="4" height="200"/><rect x="1488" y="777" width="3" height="200"/><rect x="1546" y="777" width="7" height="200"/>
</g>
<g fill="#8fb6ea">
<rect x="333" y="777" width="2" height="200"/><rect x="356" y="777" width="2" height="200"/><rect x="478" y="777" width="2" height="200"/><rect x="838" y="777" width="2" height="200"/><rect x="1457" y="777" width="3" height="200"/><rect x="1501" y="777" width="2" height="200"/>
</g>

<!-- Track panel controls -->
<rect x="50" y="392" width="28" height="26" fill="#c9c9d6"/><rect x="81" y="392" width="157" height="26" fill="#c9c9d6"/>
<rect x="50" y="391" width="188" height="1.5" fill="#fff"/><rect x="78.5" y="391" width="2.5" height="28" fill="#a0a0a0"/>
<rect x="49" y="418" width="191" height="3" fill="#a0a0a0"/>
<path d="M57 400L72 413M72 400L57 413" stroke="#111" stroke-width="3"/>
<text class="m" x="85" y="413" font-size="21" textLength="48" lengthAdjust="spacingAndGlyphs">sign</text>
<path d="M209 399H232L220.5 411Z" fill="#000"/>
<text class="z" x="55" y="446" font-size="25" textLength="82" lengthAdjust="spacingAndGlyphs">立体声，</text>
<text class="z" x="150" y="445" font-size="23" textLength="88" lengthAdjust="spacingAndGlyphs">2880000</text>
<text class="z" x="237" y="445" font-size="18" textLength="21" lengthAdjust="spacingAndGlyphs">Hz</text>
<text class="z" x="55" y="479" font-size="24" textLength="105" lengthAdjust="spacingAndGlyphs">32位 浮点</text>
<rect x="49" y="488" width="191" height="3" fill="#a0a0a0"/>
<rect x="50" y="491" width="188" height="29" fill="#c9c9d6"/>
<path d="M50 519V492H141M145 519V492H238" fill="none" stroke="#fff" stroke-width="2.5"/>
<path d="M141 491V520H50M145 520H238" fill="none" stroke="#a0a0a0" stroke-width="3"/><rect x="142" y="491" width="4" height="29" fill="#a0a0a0"/>
<rect x="49" y="520" width="191" height="3" fill="#a0a0a0"/>
<text class="z" x="72" y="515" font-size="24" textLength="46" lengthAdjust="spacingAndGlyphs" font-weight="500">静音</text>
<text class="z" x="167" y="515" font-size="24" textLength="47" lengthAdjust="spacingAndGlyphs" font-weight="500">独奏</text>
<rect x="75" y="541" width="10" height="2.5" fill="#000"/><rect x="203" y="541" width="10" height="2.5" fill="#000"/><rect x="207" y="537" width="2.5" height="10" fill="#000"/>
<text class="s" x="75" y="605" font-size="14" textLength="17" lengthAdjust="spacingAndGlyphs">左</text><text class="s" x="201" y="605" font-size="14" textLength="17" lengthAdjust="spacingAndGlyphs">右</text>
<g fill="#fff">
<rect x="76" y="553" width="2" height="8"/><rect x="90" y="556" width="2" height="5"/><rect x="104" y="556" width="2" height="5"/><rect x="118" y="556" width="2" height="5"/><rect x="158" y="556" width="2" height="5"/><rect x="172" y="556" width="2" height="5"/><rect x="186" y="556" width="2" height="5"/><rect x="200" y="556" width="2" height="5"/><rect x="212" y="553" width="2" height="8"/>
<rect x="76" y="613" width="2" height="8"/><rect x="90" y="616" width="2" height="5"/><rect x="104" y="616" width="2" height="5"/><rect x="118" y="616" width="2" height="5"/><rect x="158" y="616" width="2" height="5"/><rect x="172" y="616" width="2" height="5"/><rect x="186" y="616" width="2" height="5"/><rect x="200" y="616" width="2" height="5"/><rect x="212" y="613" width="2" height="8"/>
</g>
<rect x="75" y="562.5" width="144" height="2" fill="#a0a0a8"/><rect x="75" y="622.5" width="144" height="2" fill="#a0a0a8"/>
<use href="#thumb" x="143" y="547"/><use href="#thumb" x="143" y="607"/>
<rect x="137" y="547.5" width="12" height="2" fill="#222"/><rect x="137" y="607.5" width="12" height="2" fill="#222"/>
<rect x="86" y="942" width="122" height="34" fill="#c9c9d6" stroke="#a4a4a4" stroke-width="2.5"/>
<path d="M88 975V944H206" fill="none" stroke="#fff" stroke-width="2"/>
<path d="M137 967L147 955L158 967Z" fill="#9a9ab2" stroke="#111" stroke-width="1.5"/>

<!-- Vertical ruler labels -->
<g>
<text class="z v" font-weight="bold" x="250" y="418" textLength="33" lengthAdjust="spacingAndGlyphs">8k</text>
<text class="z v" font-weight="bold" x="250" y="508" textLength="33" lengthAdjust="spacingAndGlyphs">5k</text>
<text class="z v" x="255" y="544" textLength="28" lengthAdjust="spacingAndGlyphs">4k</text>
<text class="z v" x="255" y="580" textLength="28" lengthAdjust="spacingAndGlyphs">3k</text>
<text class="z v" x="255" y="617" textLength="28" lengthAdjust="spacingAndGlyphs">2k</text>
<text class="z v" font-weight="bold" x="250" y="670" textLength="33" lengthAdjust="spacingAndGlyphs">0k</text>
<text class="z v" font-weight="bold" x="250" y="718" textLength="33" lengthAdjust="spacingAndGlyphs">8k</text>
<text class="z v" font-weight="bold" x="250" y="808" textLength="33" lengthAdjust="spacingAndGlyphs">5k</text>
<text class="z v" x="255" y="845" textLength="28" lengthAdjust="spacingAndGlyphs">4k</text>
<text class="z v" x="255" y="880" textLength="28" lengthAdjust="spacingAndGlyphs">3k</text>
<text class="z v" x="255" y="917" textLength="28" lengthAdjust="spacingAndGlyphs">2k</text>
<text class="z v" font-weight="bold" x="250" y="970" textLength="33" lengthAdjust="spacingAndGlyphs">0k</text>
</g>
<path d="M289 428H293M289 464H293M285 498H293M289 534H293M289 570H293M289 606H293M289 640H293M289 728H293M289 764H293M285 798H293M289 834H293M289 870H293M289 906H293M289 940H293M285 976H293" stroke="#000" stroke-width="2"/>

<!-- V scrollbar -->
<rect x="1852" y="380" width="2" height="626" fill="#fff"/>
<rect x="1854" y="380" width="28" height="34" fill="#f0f0f0"/>
<rect x="1854" y="414" width="28" height="529" fill="#c8c8c8"/>
<rect x="1854" y="943" width="28" height="63" fill="#f0f0f0"/>
<path d="M1865 399L1870 390L1875 399L1870 396Z" fill="#666" stroke="#666" stroke-width="2"/>
<path d="M1864 983L1870 991L1876 983" fill="none" stroke="#666" stroke-width="3"/>

<!-- H scrollbar -->
<rect x="345" y="1007" width="34" height="30" fill="#c8c8c8"/>
<path d="M330 1016L324 1022L330 1028" fill="none" stroke="#666" stroke-width="3"/>
<path d="M1833 1016L1839 1022L1833 1028" fill="none" stroke="#666" stroke-width="3"/>

<!-- Selection bar -->
<rect x="39" y="1039" width="1843" height="2.5" fill="#a4a4a4"/>
<rect x="41" y="1042" width="19" height="88" fill="#f4f4f4" stroke="#c4c4c4"/><rect x="47" y="1046" width="8" height="84" fill="url(#grip)"/>
<rect x="60" y="1042" width="1.5" height="88" fill="#a4a4a4"/>
<text class="z" x="62" y="1077" font-size="23" textLength="193" lengthAdjust="spacingAndGlyphs">项目采样率（Hz）:</text>
<text class="z" x="292" y="1077" font-size="23" textLength="83" lengthAdjust="spacingAndGlyphs">吸附到:</text>
<text class="z" x="457" y="1077" font-size="23" textLength="133" lengthAdjust="spacingAndGlyphs">选区的起点:</text>
<circle cx="836" cy="1068" r="12" fill="#fff" stroke="#777" stroke-width="2.4"/><circle cx="836" cy="1068" r="7" fill="#333"/>
<circle cx="941" cy="1068" r="12" fill="#fff" stroke="#777" stroke-width="2.4"/>
<text class="z" x="855" y="1078" font-size="23" textLength="46" lengthAdjust="spacingAndGlyphs">结尾</text>
<text class="z" x="962" y="1078" font-size="23" textLength="46" lengthAdjust="spacingAndGlyphs">长度</text>
<text class="z" x="1203" y="1076" font-size="23" textLength="107" lengthAdjust="spacingAndGlyphs">音频位置:</text>
<rect x="64" y="1094" width="158" height="40" fill="#fff" stroke="#a4a4a4" stroke-width="3"/>
<text class="z" x="68" y="1119" font-size="23" textLength="84" lengthAdjust="spacingAndGlyphs">2880000</text>
<path d="M199 1112L205 1119L211 1112" fill="none" stroke="#666" stroke-width="1.8"/>
<rect x="280" y="1087" width="2" height="43" fill="#aaa"/>
<rect x="294" y="1094" width="150" height="40" fill="#e0e0e0" stroke="#adadad" stroke-width="3"/>
<text class="z" x="300" y="1122" font-size="24" textLength="48" lengthAdjust="spacingAndGlyphs">关闭</text>
<path d="M421 1112L427 1119L433 1112" fill="none" stroke="#666" stroke-width="1.8"/>
<rect x="1189" y="1087" width="2" height="43" fill="#aaa"/>

<!-- Time controls -->
<g>
<rect x="458" y="1093" width="348" height="40" fill="#bdbdbd"/><path d="M459 1130V1094H805" fill="none" stroke="#808080" stroke-width="3"/><path d="M806 1093V1130" stroke="#fff" stroke-width="2"/>
<rect x="790" y="1096" width="15" height="34" fill="#e8e8e8"/><path d="M792 1110H804L798 1118Z" fill="#000"/>
<text class="z b" x="467" y="1124" textLength="33" lengthAdjust="spacing">00</text><text class="z" font-size="30" x="518" y="1124" textLength="18" lengthAdjust="spacingAndGlyphs">h</text>
<text class="z b" x="555" y="1124" textLength="33" lengthAdjust="spacing">00</text><text class="z" font-size="30" x="607" y="1124" textLength="14" lengthAdjust="spacingAndGlyphs">m</text>
<text class="z b" x="642" y="1124" textLength="33" lengthAdjust="spacing">00</text><text class="z b" x="680" y="1124">.</text><text class="z b" x="699" y="1124" textLength="54" lengthAdjust="spacing">000</text><text class="z" font-size="30" x="773" y="1124" textLength="11" lengthAdjust="spacingAndGlyphs">s</text>
</g>
<g>
<rect x="824" y="1093" width="349" height="40" fill="#bdbdbd"/><path d="M825 1130V1094H1172" fill="none" stroke="#808080" stroke-width="3"/><path d="M1173 1093V1130" stroke="#fff" stroke-width="2"/>
<rect x="1156" y="1096" width="15" height="34" fill="#e8e8e8"/><path d="M1158 1110H1170L1164 1118Z" fill="#000"/>
<text class="z b" x="832" y="1124" textLength="33" lengthAdjust="spacing">00</text><text class="z" font-size="30" x="884" y="1124" textLength="18" lengthAdjust="spacingAndGlyphs">h</text>
<text class="z b" x="921" y="1124" textLength="33" lengthAdjust="spacing">00</text><text class="z" font-size="30" x="972" y="1124" textLength="14" lengthAdjust="spacingAndGlyphs">m</text>
<text class="z b" x="1009" y="1124" textLength="33" lengthAdjust="spacing">00</text><text class="z b" x="1047" y="1124">.</text><text class="z b" x="1064" y="1124" textLength="54" lengthAdjust="spacing">000</text><text class="z" font-size="30" x="1138" y="1124" textLength="11" lengthAdjust="spacingAndGlyphs">s</text>
</g>
<g>
<rect x="1204" y="1093" width="350" height="40" fill="#bdbdbd"/><path d="M1205 1130V1094H1553" fill="none" stroke="#808080" stroke-width="3"/><path d="M1554 1093V1130" stroke="#fff" stroke-width="2"/>
<rect x="1536" y="1096" width="15" height="34" fill="#e8e8e8"/><path d="M1538 1110H1550L1544 1118Z" fill="#000"/>
<text class="z b" x="1213" y="1124" textLength="33" lengthAdjust="spacing">00</text><text class="z" font-size="30" x="1265" y="1124" textLength="18" lengthAdjust="spacingAndGlyphs">h</text>
<text class="z b" x="1302" y="1124" textLength="33" lengthAdjust="spacing">00</text><text class="z" font-size="30" x="1353" y="1124" textLength="14" lengthAdjust="spacingAndGlyphs">m</text>
<text class="z b" x="1389" y="1124" textLength="33" lengthAdjust="spacing">00</text><text class="z b" x="1427" y="1124">.</text><text class="z b" x="1445" y="1124" textLength="54" lengthAdjust="spacing">000</text><text class="z" font-size="30" x="1519" y="1124" textLength="11" lengthAdjust="spacingAndGlyphs">s</text>
</g>
</svg>
</body></html>
